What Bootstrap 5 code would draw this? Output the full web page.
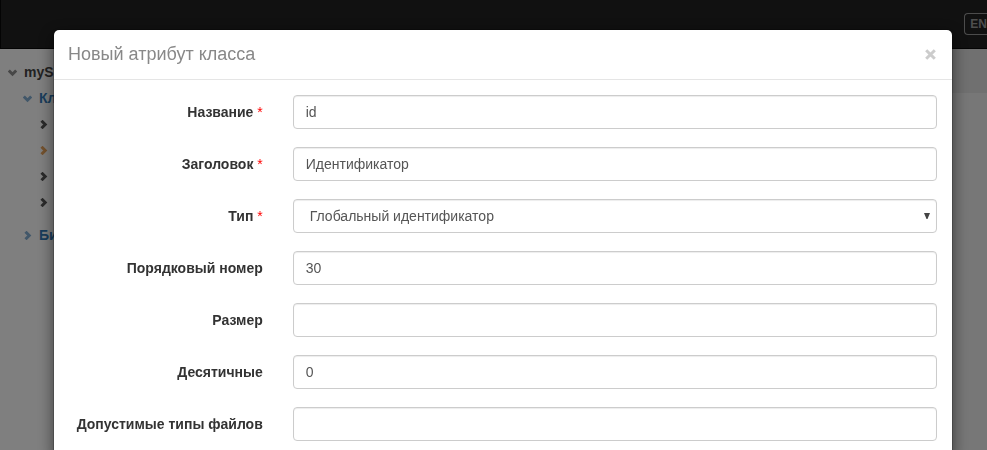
<!DOCTYPE html>
<html lang="ru">
<head>
<meta charset="utf-8">
<meta name="viewport" content="width=device-width, initial-scale=1">
<title>Новый атрибут класса</title>
<link href="https://cdn.jsdelivr.net/npm/bootstrap@5.3.0/dist/css/bootstrap.min.css" rel="stylesheet">
<style>
body { font: 14px/20px "Liberation Sans", Arial, sans-serif; color: #333; }
.page { min-height: 100vh; }
.topbar { height: 49px; background: #222; border: 1px solid #080808; border-width: 0 0 1px 1px; }
.btn-lang { font: bold 12px/20px "Liberation Sans", Arial, sans-serif; color: #9d9d9d; border: 1px solid #999; border-right: 0; border-radius: 4px 0 0 4px; padding: 0 0 0 5px; white-space: nowrap; }
.sidebar { width: 240px; padding-top: 10px; font-weight: bold; background: #fff; }
.tree-row { display: flex; align-items: center; height: 26px; gap: 7px; padding-left: 8px; color: #444; text-decoration: none; }
.tree-row svg { width: 9px; height: 9px; flex: none; fill: none; stroke: currentColor; stroke-width: 3; }
.tree-row.level-1 { padding-left: 23px; color: #337ab7; }
.tree-row.level-2 { padding-left: 39px; color: #555; }
.tree-row.current { color: #e8a45c; }
.tree-row.next-group { margin-top: 7px; }
.soft { opacity: .6; }
.workspace { background: #eee; }
.crumbs { height: 44px; background: #e0e0e0; }
.modal { overflow: hidden; }
.attr-dialog { max-width: none; margin: 29px 34px 30px 53px; }
.modal-content { border: 1px solid rgba(0,0,0,.2); border-radius: 6px; box-shadow: 0 5px 15px rgba(0,0,0,.5); }
.modal-header { padding: 15px 16px 16px 14px; border-bottom: 1px solid #e5e5e5; }
.modal-title { font-size: 18px; line-height: 18px; color: #888; }
.btn-x { display: flex; border: 0; padding: 0; background: none; }
.btn-x svg { width: 11px; height: 11px; stroke: #ccc; stroke-width: 3; }
.modal-body { padding: 15px 15px 15px 14px; }
.attr-form { display: grid; gap: 18px; }
.attr-form .row { --bs-gutter-x: 30px; }
.attr-form label { padding-top: 7px; font-weight: bold; text-align: right; }
.req { color: #f00; font-weight: normal; }
.form-control, .form-select { height: 34px; padding: 6px 12px; font-size: 14px; line-height: 20px; color: #555; border: 1px solid #ccc; border-radius: 4px; box-shadow: inset 0 1px 1px rgba(0,0,0,.075); }
.form-select { padding-left: 16px; background-image: none; }
.select-wrap { position: relative; }
.select-wrap svg { position: absolute; right: 22px; top: 14px; width: 6px; height: 6px; fill: #444; pointer-events: none; }
</style>
<script src="https://cdn.jsdelivr.net/npm/bootstrap@5.3.0/dist/js/bootstrap.bundle.min.js"></script>
</head>
<body class="overflow-hidden">
<div class="page d-flex flex-column">
  <header class="topbar d-flex align-items-center justify-content-end">
    <button type="button" class="btn-lang bg-transparent">EN</button>
  </header>
  <div class="d-flex flex-grow-1">
    <nav class="sidebar">
      <a href="#" class="tree-row"><svg class="soft" viewBox="0 0 9 9"><path d="M.8 2.5 4.5 6.2 8.2 2.5"/></svg>myS</a>
      <a href="#" class="tree-row level-1"><svg class="soft" viewBox="0 0 9 9"><path d="M.8 2.5 4.5 6.2 8.2 2.5"/></svg>Кл</a>
      <a href="#" class="tree-row level-2" aria-label="Класс 1"><svg viewBox="0 0 9 9"><path d="M2.5.8 6.2 4.5 2.5 8.2"/></svg></a>
      <a href="#" class="tree-row level-2 current" aria-label="Класс 2"><svg viewBox="0 0 9 9"><path d="M2.5.8 6.2 4.5 2.5 8.2"/></svg></a>
      <a href="#" class="tree-row level-2" aria-label="Класс 3"><svg viewBox="0 0 9 9"><path d="M2.5.8 6.2 4.5 2.5 8.2"/></svg></a>
      <a href="#" class="tree-row level-2" aria-label="Класс 4"><svg viewBox="0 0 9 9"><path d="M2.5.8 6.2 4.5 2.5 8.2"/></svg></a>
      <a href="#" class="tree-row level-1 next-group"><svg class="soft" viewBox="0 0 9 9"><path d="M2.5.8 6.2 4.5 2.5 8.2"/></svg>Би</a>
    </nav>
    <main class="workspace flex-grow-1"><div class="crumbs"></div></main>
  </div>
</div>

<div class="modal-backdrop show"></div>
<div class="modal show d-block" role="dialog" aria-modal="true" aria-labelledby="dlg-title">
  <div class="modal-dialog attr-dialog">
    <div class="modal-content">
      <div class="modal-header">
        <h4 class="modal-title" id="dlg-title">Новый атрибут класса</h4>
        <button type="button" class="btn-x" aria-label="Закрыть"><svg viewBox="0 0 11 11"><path d="M1.2 1.2 9.8 9.8M9.8 1.2 1.2 9.8"/></svg></button>
      </div>
      <div class="modal-body">
        <form class="attr-form">
          <div class="row"><label class="col-3" for="f-name">Название <span class="req">*</span></label><div class="col-9"><input class="form-control" id="f-name" type="text" value="id"></div></div>
          <div class="row"><label class="col-3" for="f-caption">Заголовок <span class="req">*</span></label><div class="col-9"><input class="form-control" id="f-caption" type="text" value="Идентификатор"></div></div>
          <div class="row"><label class="col-3" for="f-type">Тип <span class="req">*</span></label><div class="col-9 select-wrap"><select class="form-select" id="f-type"><option>Глобальный идентификатор</option></select><svg viewBox="0 0 6 6"><path d="M0 0h6L3.5 6h-1z"/></svg></div></div>
          <div class="row"><label class="col-3" for="f-order">Порядковый номер</label><div class="col-9"><input class="form-control" id="f-order" type="text" value="30"></div></div>
          <div class="row"><label class="col-3" for="f-size">Размер</label><div class="col-9"><input class="form-control" id="f-size" type="text"></div></div>
          <div class="row"><label class="col-3" for="f-dec">Десятичные</label><div class="col-9"><input class="form-control" id="f-dec" type="text" value="0"></div></div>
          <div class="row"><label class="col-3 text-nowrap" for="f-files">Допустимые типы файлов</label><div class="col-9"><input class="form-control" id="f-files" type="text"></div></div>
        </form>
      </div>
    </div>
  </div>
</div>
</body>
</html>
